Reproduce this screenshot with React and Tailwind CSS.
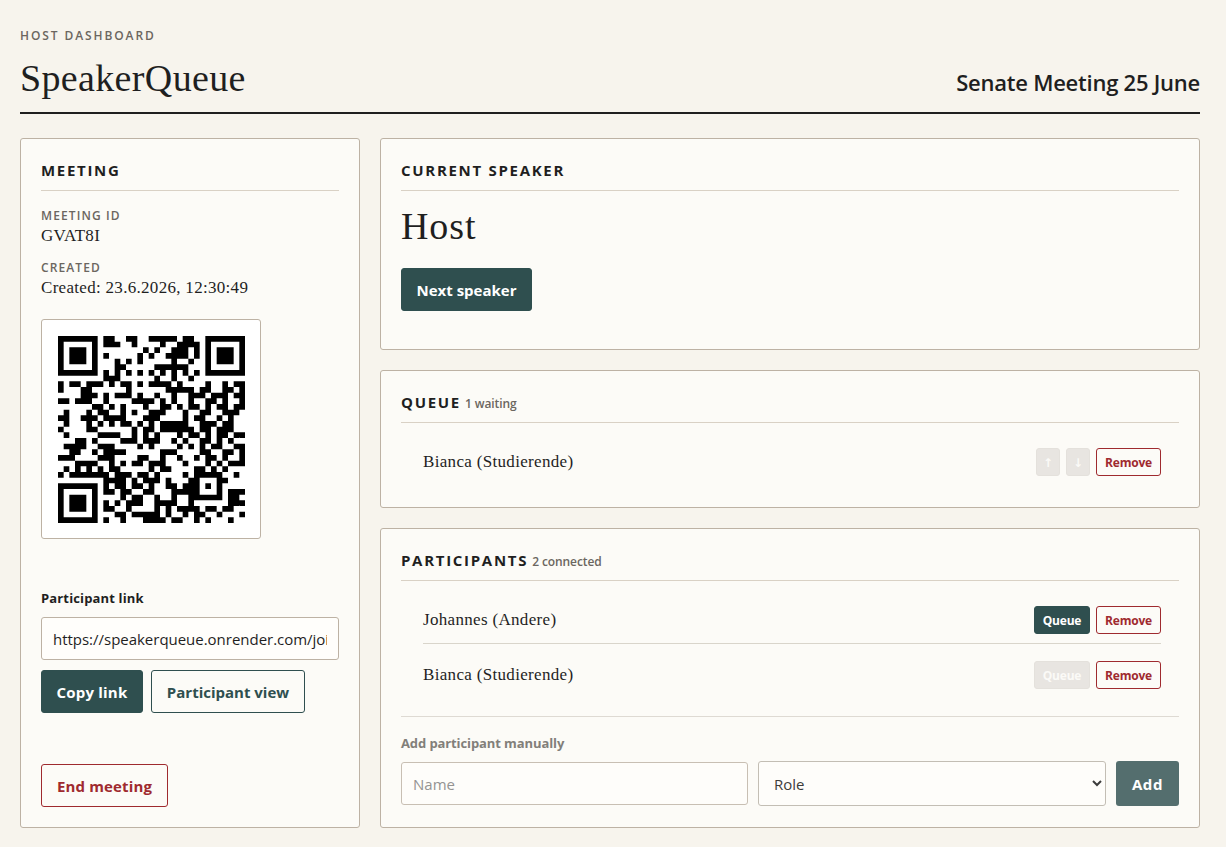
import clsx from 'clsx';

// --- QR code (version 4, level M, mask 3) ---
const SIZE = 33;
const ALNUM = '0123456789ABCDEFGHIJKLMNOPQRSTUVWXYZ $%*+-./:';
const FORMAT = '101101101001011';

const exp = [];
const log = [];
for (let i = 0, x = 1; i < 255; i++) {
  exp[i] = x;
  log[x] = i;
  x <<= 1;
  if (x > 255) x ^= 0x11d;
}
const mul = (a, b) => (a && b ? exp[(log[a] + log[b]) % 255] : 0);
const bin = (n, len) => n.toString(2).padStart(len, '0');

let generator = [1];
for (let i = 0; i < 18; i++) {
  const next = [...generator, 0];
  generator.forEach((g, j) => {
    next[j + 1] ^= mul(g, exp[i]);
  });
  generator = next;
}

function errorCodes(block) {
  const rest = [...block, ...Array(18).fill(0)];
  for (let i = 0; i < block.length; i++) {
    const factor = rest[i];
    generator.forEach((g, j) => {
      rest[i + j] ^= mul(g, factor);
    });
  }
  return rest.slice(block.length);
}

function codewords(url, code) {
  let bits = '0100' + bin(url.length, 8);
  for (const c of url) bits += bin(c.charCodeAt(0), 8);
  bits += '0010' + bin(code.length, 9);
  for (let i = 0; i < code.length; i += 2) {
    const a = ALNUM.indexOf(code[i]);
    bits += i + 1 < code.length ? bin(a * 45 + ALNUM.indexOf(code[i + 1]), 11) : bin(a, 6);
  }
  bits += '0000';
  while (bits.length % 8) bits += '0';
  const data = bits.match(/.{8}/g).map((b) => parseInt(b, 2));
  for (let p = 0; data.length < 64; p++) data.push(p % 2 ? 0x11 : 0xec);

  const blocks = [data.slice(0, 32), data.slice(32)];
  const ecc = blocks.map(errorCodes);
  const out = [];
  for (let i = 0; i < 32; i++) out.push(blocks[0][i], blocks[1][i]);
  for (let i = 0; i < 18; i++) out.push(ecc[0][i], ecc[1][i]);
  return out.map((v) => bin(v, 8)).join('');
}

function qrMatrix(url, code) {
  const stream = codewords(url, code);
  const m = Array.from({ length: SIZE }, () => Array(SIZE).fill(null));

  const square = (row, col, radius) => {
    for (let r = -radius; r <= radius; r++) {
      for (let c = -radius; c <= radius; c++) {
        const y = row + r;
        const x = col + c;
        const d = Math.max(Math.abs(r), Math.abs(c));
        if (y < 0 || x < 0 || y >= SIZE || x >= SIZE) continue;
        m[y][x] = radius === 4 ? +(d !== 2 && d !== 4) : +(d !== 1);
      }
    }
  };
  square(3, 3, 4);
  square(3, 29, 4);
  square(29, 3, 4);
  square(26, 26, 2);
  for (let i = 8; i < 25; i++) m[6][i] = m[i][6] = +(i % 2 === 0);

  for (let i = 0; i < 8; i++) {
    m[8][i > 5 ? i + 1 : i] = +FORMAT[i];
    m[8][25 + i] = +FORMAT[7 + i];
  }
  m[7][8] = +FORMAT[8];
  for (let i = 0; i < 6; i++) m[5 - i][8] = +FORMAT[9 + i];
  for (let i = 0; i < 7; i++) m[32 - i][8] = +FORMAT[i];
  m[25][8] = 1;

  let k = 0;
  let up = true;
  for (let c = 32; c > 0; c -= 2) {
    if (c === 6) c = 5;
    for (let i = 0; i < SIZE; i++) {
      const r = up ? 32 - i : i;
      for (const x of [c, c - 1]) {
        if (m[r][x] === null) m[r][x] = +(stream[k++] || 0) ^ +((r + x) % 3 === 0);
      }
    }
    up = !up;
  }
  return m;
}

const qrPath = qrMatrix('http://speakerqueue.onrender.com/join', '/GVAT8I')
  .flatMap((row, y) => row.map((on, x) => (on ? `M${x} ${y}h1v1h-1z` : '')))
  .join('');

// --- UI ---
function Panel({ title, note, className, children }) {
  return (
    <section className={clsx('rounded-[3px] border border-[#bdb2a4] bg-[#fcfbf7] p-5', className)}>
      <h2 className="flex items-baseline border-b border-[#d9d1c5] pb-[9px] text-[15px] leading-[22px] font-bold tracking-[1.7px] uppercase">
        {title}
        {note && (
          <span className="ml-1 text-xs leading-none font-semibold tracking-[-0.1px] text-[#6b6660] normal-case">{note}</span>
        )}
      </h2>
      {children}
    </section>
  );
}

function Button({ variant = 'primary', className, ...props }) {
  return (
    <button
      className={clsx(
        'h-[43px] rounded-[3px] border pt-0.5 text-[15px] font-bold whitespace-nowrap',
        variant === 'primary' && 'border-[#2f4f4f] bg-[#2f4f4f] text-white',
        variant === 'outline' && 'border-[#2f4f4f] text-[#2f4f4f]',
        variant === 'danger' && 'border-[#9f2a2f] text-[#9f2a2f]',
        className
      )}
      {...props}
    />
  );
}

function SmallButton({ variant = 'primary', className, ...props }) {
  return (
    <button
      className={clsx(
        'h-7 rounded-[3px] border pt-0.5 text-xs font-bold tracking-[-0.2px]',
        variant === 'primary' && 'border-[#2f4f4f] bg-[#2f4f4f] text-white',
        variant === 'danger' && 'w-[65px] border-[#9f2a2f] text-[#9f2a2f]',
        variant === 'off' && 'border-[#e4e1dc] bg-[#e8e5e1] text-[#fbfaf7]',
        className
      )}
      {...props}
    />
  );
}

function Row({ name, children, className }) {
  return (
    <li className={clsx('flex items-center justify-between', className)}>
      <span className="font-['Liberation_Serif',serif] text-[17px] leading-7 tracking-[0.32px]">{name}</span>
      <div className="flex gap-1.5">
        {children}
        <SmallButton variant="danger">Remove</SmallButton>
      </div>
    </li>
  );
}

function Detail({ label, value, className }) {
  return (
    <div className={className}>
      <dt className="text-xs leading-[18px] font-semibold tracking-[1.1px] text-[#6b6660] uppercase">{label}</dt>
      <dd className="mt-px font-['Liberation_Serif',serif] text-[17px] leading-5 tracking-[0.3px]">{value}</dd>
    </div>
  );
}

export default function App() {
  return (
    <div className="min-h-screen bg-[#f7f4ed] pt-[27px] pr-[26px] pb-[19px] pl-5 font-['Open_Sans',sans-serif] text-[#1f1f1f]">
      <header className="flex items-end justify-between border-b-2 border-[#1f1f1f] pb-[11px]">
        <div>
          <p className="text-xs leading-[18px] font-semibold tracking-[1.9px] text-[#6b6660] uppercase">Host dashboard</p>
          <h1 className="mt-2.5 font-['Liberation_Serif',serif] text-[38px] leading-[46px] tracking-[0.35px]">SpeakerQueue</h1>
        </div>
        <p className="mb-1 text-[22px] leading-[30px] font-semibold tracking-[-0.24px]">Senate Meeting 25 June</p>
      </header>

      <main className="mt-6 grid grid-cols-[340px_1fr] gap-5">
        <Panel title="Meeting">
          <dl>
            <Detail label="Meeting ID" value="GVAT8I" className="mt-4" />
            <Detail label="Created" value="Created: 23.6.2026, 12:30:49" className="mt-[13px]" />
          </dl>

          <div className="mt-[21px] size-[220px] rounded-[3px] border border-[#bdb2a4] bg-white p-4">
            <svg viewBox="0 0 33 33" className="size-[187px]">
              <path d={qrPath} fill="#000" />
            </svg>
          </div>

          <label className="mt-[49px] block text-[13px] leading-5 font-bold tracking-[0.15px]">Participant link</label>
          <input
            readOnly
            value="https://speakerqueue.onrender.com/join/GVAT8I"
            className="mt-[9px] block h-[43px] w-full rounded-[3px] border border-[#bdb2a4] bg-[#fffefb] px-[11px] text-[15px] tracking-[-0.02px]"
          />
          <div className="mt-2.5 flex gap-2">
            <Button className="w-[102px] tracking-[0.2px]">Copy link</Button>
            <Button variant="outline" className="w-[154px]">Participant view</Button>
          </div>
          <Button variant="danger" className="mt-[51px] block w-[127px] tracking-[0.15px]">End meeting</Button>
        </Panel>

        <div className="flex flex-col gap-5">
          <Panel title="Current speaker" className="h-[212px]">
            <p className="mt-3 font-['Liberation_Serif',serif] text-[38px] leading-[46px] tracking-[0.9px]">Host</p>
            <Button className="mt-[19px] block w-[131px]">Next speaker</Button>
          </Panel>

          <Panel title="Queue" note="1 waiting" className="h-[138px]">
            <ul className="mt-[25px] mr-[18px] ml-[22px]">
              <Row name="Bianca (Studierende)">
                <SmallButton variant="off" className="w-6 font-['DejaVu_Sans',sans-serif]">↑</SmallButton>
                <SmallButton variant="off" className="w-6 font-['DejaVu_Sans',sans-serif]">↓</SmallButton>
              </Row>
            </ul>
          </Panel>

          <Panel title="Participants" note="2 connected" className="h-[300px]">
            <ul className="mt-[25px] mr-[18px] ml-[22px]">
              <Row name="Johannes (Andere)" className="border-b border-[#d9d5cb] pb-[9px]">
                <SmallButton className="w-14">Queue</SmallButton>
              </Row>
              <Row name="Bianca (Studierende)" className="mt-[17px]">
                <SmallButton variant="off" className="w-14">Queue</SmallButton>
              </Row>
            </ul>

            <form className="mt-[27px] border-t border-[#dedad3] pt-4">
              <p className="text-[13px] leading-5 font-bold tracking-[-0.1px] text-[#827f7a]">Add participant manually</p>
              <div className="mt-2 grid grid-cols-[347px_348px_63px] items-center gap-2.5">
                <input
                  placeholder="Name"
                  className="h-[43px] rounded-[3px] border border-[#c8bfb3] bg-[#fefdfa] px-[11px] text-[15px] placeholder:text-[#959492]"
                />
                <select className="h-[45px] rounded-[3px] border border-[#c3beb4] bg-[#fefdfa] px-[11px] text-[15px] text-[#3c3c3b]">
                  <option>Role</option>
                </select>
                <button type="button" className="h-[45px] rounded-[3px] bg-[#546e6e] pt-0.5 text-[15px] font-bold tracking-[0.6px] text-white">
                  Add
                </button>
              </div>
            </form>
          </Panel>
        </div>
      </main>
    </div>
  );
}
